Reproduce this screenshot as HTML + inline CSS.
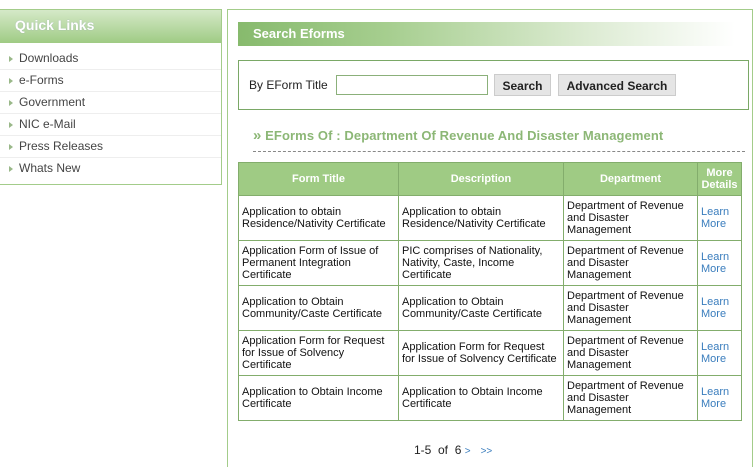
<!DOCTYPE html>
<html><head><style>
*{margin:0;padding:0;box-sizing:border-box}
html,body{width:754px;height:467px;overflow:hidden}
body{background:#fff;font-family:"Liberation Sans",Arial,sans-serif;position:relative}
.left{position:absolute;left:-1px;top:9px;width:223px;height:176px;border:1px solid #a3cc8a}
.lh{height:33px;background:linear-gradient(#d5e9c8,#9fcb84);color:#fff;font-weight:bold;font-size:14px;padding:7px 0 0 15px;text-shadow:0 0 1px #9ab}
.li{height:22px;border-bottom:1px solid #eee;font-size:12px;color:#444;padding:3px 0 0 19px;position:relative}
.li:last-child{border-bottom:none}
.li:before{content:"";position:absolute;left:9px;top:8px;border-left:4px solid #9ab889;border-top:3px solid transparent;border-bottom:3px solid transparent}
.right{position:absolute;left:227px;top:9px;width:526px;height:458px;border:1px solid #a3cc8a;border-bottom:none}
.sh{position:absolute;left:238px;top:22px;width:497px;height:24px;background:linear-gradient(90deg,#87ba6d,#a6ce8f 30%,#dcebd2 70%,#fff);color:#fff;font-weight:bold;font-size:13px;padding:4px 0 0 15px}
.sb{position:absolute;left:238px;top:60px;width:511px;height:50px;border:1px solid #7aa866}
.lbl{position:absolute;left:249px;top:78px;font-size:12px;color:#222}
.inp{position:absolute;left:336px;top:75px;width:152px;height:20px;border:1px solid #8bb07a}
.btn{position:absolute;top:74px;height:22px;background:#e5e5e5;border:1px solid #ccc;font-weight:bold;font-size:12px;color:#222;text-align:center;padding-top:4px}
.tt{position:absolute;left:253px;top:127px;font-size:13px;font-weight:bold;color:#8cb776;letter-spacing:0.1px}
.dash{position:absolute;left:253px;top:151px;width:492px;border-top:1px dashed #888}
table{position:absolute;left:238px;top:162px;width:504px;border-collapse:collapse;font-size:11px;color:#111}
td,th{border:1px solid #83ad6c;padding:0 3px;vertical-align:middle;line-height:12px}
th{background:#9fcb84;color:#fff;height:33px;font-size:11px}
td{height:45px}
td a{color:#3a7dbd;text-decoration:none}
.pg{position:absolute;left:414px;top:443px;font-size:12px;color:#222}
.pg span{color:#3a7dbd;font-size:10px}
</style></head><body>
<div class="left"><div class="lh">Quick Links</div>
<div style="height:5px"></div>
<div class="li">Downloads</div><div class="li">e-Forms</div><div class="li">Government</div><div class="li">NIC e-Mail</div><div class="li">Press Releases</div><div class="li">Whats New</div></div>
<div class="right"></div>
<div class="sh">Search Eforms</div>
<div class="sb"></div>
<div class="lbl">By EForm Title</div>
<div class="inp"></div>
<div class="btn" style="left:494px;width:57px">Search</div>
<div class="btn" style="left:558px;width:118px">Advanced Search</div>
<div class="tt"><span style="font-size:15px">&raquo;</span> EForms Of : Department Of Revenue And Disaster Management</div>
<div class="dash"></div>
<table>
<tr><th style="width:160px">Form Title</th><th style="width:165px">Description</th><th style="width:134px">Department</th><th>More Details</th></tr>
<tr><td>Application to obtain Residence/Nativity Certificate</td><td>Application to obtain Residence/Nativity Certificate</td><td>Department of Revenue and Disaster Management</td><td><a>Learn More</a></td></tr>
<tr><td>Application Form of Issue of Permanent Integration Certificate</td><td>PIC comprises of Nationality, Nativity, Caste, Income Certificate</td><td>Department of Revenue and Disaster Management</td><td><a>Learn More</a></td></tr>
<tr><td>Application to Obtain Community/Caste Certificate</td><td>Application to Obtain Community/Caste Certificate</td><td>Department of Revenue and Disaster Management</td><td><a>Learn More</a></td></tr>
<tr><td>Application Form for Request for Issue of Solvency Certificate</td><td>Application Form for Request for Issue of Solvency Certificate</td><td>Department of Revenue and Disaster Management</td><td><a>Learn More</a></td></tr>
<tr><td>Application to Obtain Income Certificate</td><td>Application to Obtain Income Certificate</td><td>Department of Revenue and Disaster Management</td><td><a>Learn More</a></td></tr>
</table>
<div class="pg">1-5&nbsp; of&nbsp; 6 <span>&gt;</span> &nbsp; <span>&gt;&gt;</span></div>
</body></html>
